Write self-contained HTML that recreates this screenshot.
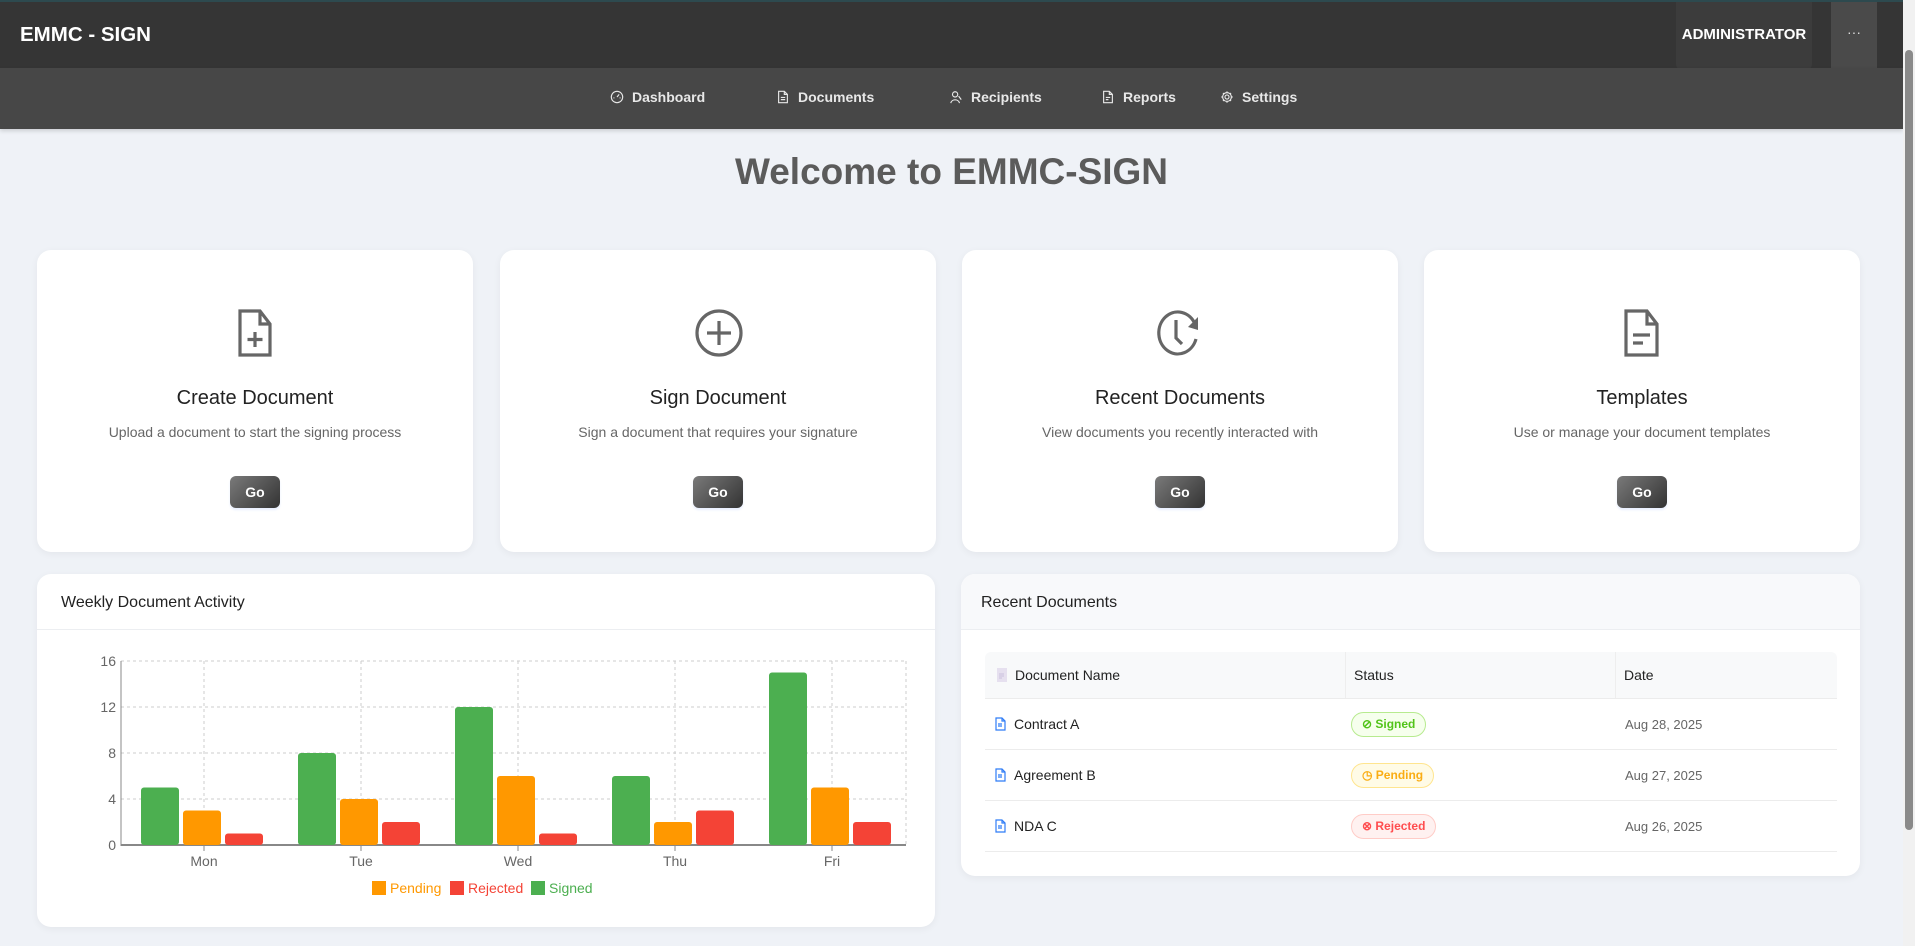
<!DOCTYPE html>
<html><head><meta charset="utf-8">
<style>
*{box-sizing:border-box;margin:0;padding:0}
body{width:1915px;height:946px;overflow:hidden;background:#eff2f7;font-family:"Liberation Sans",sans-serif;position:relative}
.top{position:absolute;left:0;top:0;width:1903px;height:68px;background:#353535;border-top:2px solid #2d4a4f}
.logo{position:absolute;left:20px;top:21px;color:#fff;font-weight:bold;font-size:20.5px}
.admin{position:absolute;left:1676px;top:0;width:136px;height:68px;background:#3c3c3c;border-radius:0 0 6px 6px;color:#fff;font-weight:bold;font-size:15px;text-align:center;line-height:66px}
.dots{position:absolute;left:1831px;top:0;width:46px;height:66px;background:#4a4a4a;color:#ddd;text-align:center;line-height:60px;font-size:14px}
.nav{position:absolute;left:0;top:68px;width:1903px;height:61px;background:#474747;box-shadow:0 2px 4px rgba(0,0,0,.15)}
.ni{position:absolute;top:21px;color:#e8e8e8;font-size:14px;font-weight:bold;display:flex;align-items:center;gap:8px}
.ni svg{width:14px;height:14px}
.sb{position:absolute;left:1903px;top:0;width:12px;height:946px;background:#f1f1f1}
.sb div{position:absolute;left:2px;top:50px;width:8px;height:780px;background:#8a8a8a;border-radius:4px}
h1{position:absolute;left:0;width:1903px;top:151px;text-align:center;font-size:37px;color:#5b5b5b;font-weight:bold}
.card{position:absolute;background:#fff;border-radius:14px;box-shadow:0 2px 8px rgba(0,0,0,.05)}
.c1{top:250px;width:436px;height:302px;text-align:center}
.c1 h3{position:absolute;top:387px;width:100%;font-size:20px;font-weight:normal;color:#222}
.c1 p{position:absolute;top:424px;width:100%;font-size:14px;color:#666}
.go{position:absolute;left:193px;top:476px;width:50px;height:32px;border-radius:6px;background:linear-gradient(135deg,#7a7a7a,#333);color:#fff;font-size:14px;font-weight:bold;line-height:32px;box-shadow:0 2px 2px rgba(100,150,255,.15)}
.hd{position:absolute;left:0;top:0;right:0;height:56px;border-bottom:1px solid #eceef1;font-size:16px;color:#222;padding:20px 0 0 24px;border-radius:14px 14px 0 0}
.tbl{position:absolute;left:24px;right:23px;top:78px}
.th{height:47px;background:#f8f9fa;border-bottom:1px solid #ececec;position:relative;border-radius:6px 6px 0 0;font-size:14px;color:#222}
.tr{height:51px;border-bottom:1px solid #ececec;position:relative;font-size:14px;color:#222}
.col{position:absolute;top:0;height:100%;display:flex;align-items:center}
.badge{display:inline-flex;align-items:center;gap:5px;height:25px;padding:0 10px;border-radius:13px;font-size:12px;font-weight:bold;border:1px solid}
.date{color:#666;font-size:13px}
</style></head><body>
<div class="top"><div class="logo">EMMC - SIGN</div><div class="admin">ADMINISTRATOR</div><div class="dots">···</div></div>
<div class="nav">
<div class="ni" style="left:610px"><svg viewBox="0 0 16 16" fill="none" stroke="#e8e8e8" stroke-width="1.3"><circle cx="8" cy="8" r="6.5"/><path d="M8 8l2.5-3M4 9h1M11 9h1"/></svg>Dashboard</div>
<div class="ni" style="left:776px"><svg viewBox="0 0 16 16" fill="none" stroke="#e8e8e8" stroke-width="1.3"><path d="M3 1.5h6.5l3.5 3.5v9.5H3z M9.5 1.5V5H13M5.5 8.5h5M5.5 11h5"/></svg>Documents</div>
<div class="ni" style="left:949px"><svg viewBox="0 0 16 16" fill="none" stroke="#e8e8e8" stroke-width="1.3"><circle cx="7" cy="5" r="3"/><path d="M2 15c1-5 9-5 10 0M11 7l3 4"/></svg>Recipients</div>
<div class="ni" style="left:1101px"><svg viewBox="0 0 16 16" fill="none" stroke="#e8e8e8" stroke-width="1.3"><path d="M3 1.5h6.5l3.5 3.5v9.5H3z M9.5 1.5V5H13M5.5 8.5h5M5.5 11h3"/></svg>Reports</div>
<div class="ni" style="left:1220px"><svg viewBox="0 0 16 16" fill="none" stroke="#e8e8e8" stroke-width="1.3"><circle cx="8" cy="8" r="2.3"/><path d="M8 1.5v2M8 12.5v2M1.5 8h2M12.5 8h2M3.4 3.4l1.4 1.4M11.2 11.2l1.4 1.4M3.4 12.6l1.4-1.4M11.2 4.8l1.4-1.4"/><circle cx="8" cy="8" r="5"/></svg>Settings</div>
</div>
<div class="sb"><div></div></div>
<h1>Welcome to EMMC-SIGN</h1>

<div class="card c1" style="left:37px">
<svg style="position:absolute;left:196px;top:58px" width="44" height="50" viewBox="0 0 44 50" fill="none" stroke="#666" stroke-width="3.2"><path d="M7 3h20l10 13v31H7z M27 3v13h10M22 24v15M14.5 31.5h15"/></svg>
<h3 style="top:137px">Create Document</h3><p style="top:174px">Upload a document to start the signing process</p><div class="go" style="top:226px">Go</div></div>
<div class="card c1" style="left:500px">
<svg style="position:absolute;left:194px;top:58px" width="50" height="50" viewBox="0 0 50 50" fill="none" stroke="#666" stroke-width="3.2"><circle cx="25" cy="25" r="22"/><path d="M25 13v24M13 25h24"/></svg>
<h3 style="top:137px">Sign Document</h3><p style="top:174px">Sign a document that requires your signature</p><div class="go" style="top:226px">Go</div></div>
<div class="card c1" style="left:962px">
<svg style="position:absolute;left:194px;top:58px" width="50" height="50" viewBox="0 0 50 50" fill="none" stroke="#666" stroke-width="3.2"><path d="M40 31A19 21 0 1 1 39 16"/><path d="M20 12v18l6 6"/><path d="M42 9l0 13l-10-3z" fill="#666" stroke="none"/></svg>
<h3 style="top:137px">Recent Documents</h3><p style="top:174px">View documents you recently interacted with</p><div class="go" style="top:226px">Go</div></div>
<div class="card c1" style="left:1424px">
<svg style="position:absolute;left:196px;top:58px" width="44" height="50" viewBox="0 0 44 50" fill="none" stroke="#666" stroke-width="3.2"><path d="M6 3h21l10 13v31H6z M27 3v13h10M13 27h17M13 35h10"/></svg>
<h3 style="top:137px">Templates</h3><p style="top:174px">Use or manage your document templates</p><div class="go" style="top:226px">Go</div></div>

<div class="card" style="left:37px;top:574px;width:898px;height:353px">
<div class="hd">Weekly Document Activity</div>
<svg style="position:absolute;left:0;top:0" width="898" height="353" viewBox="37 574 898 353" font-family="Liberation Sans" font-size="14">
<g stroke="#ccc" stroke-dasharray="3 3" stroke-width="1">
<line x1="121" y1="661" x2="906" y2="661"/><line x1="121" y1="707" x2="906" y2="707"/><line x1="121" y1="753" x2="906" y2="753"/><line x1="121" y1="799" x2="906" y2="799"/>
<line x1="204" y1="661" x2="204" y2="845"/><line x1="361" y1="661" x2="361" y2="845"/><line x1="518" y1="661" x2="518" y2="845"/><line x1="675" y1="661" x2="675" y2="845"/><line x1="832" y1="661" x2="832" y2="845"/><line x1="906" y1="661" x2="906" y2="845"/>
</g>
<line x1="121" y1="661" x2="121" y2="846" stroke="#888"/><line x1="121" y1="845" x2="906" y2="845" stroke="#888" stroke-width="2"/>
<g fill="#666" text-anchor="end"><text x="116" y="666">16</text><text x="116" y="712">12</text><text x="116" y="758">8</text><text x="116" y="804">4</text><text x="116" y="850">0</text></g>
<g fill="#666" text-anchor="middle" font-size="14"><text x="204" y="866">Mon</text><text x="361" y="866">Tue</text><text x="518" y="866">Wed</text><text x="675" y="866">Thu</text><text x="832" y="866">Fri</text></g>
<g stroke="#888"><line x1="204" y1="845" x2="204" y2="851"/><line x1="361" y1="845" x2="361" y2="851"/><line x1="518" y1="845" x2="518" y2="851"/><line x1="675" y1="845" x2="675" y2="851"/><line x1="832" y1="845" x2="832" y2="851"/></g>
<g>
<rect x="141" y="787.5" width="38" height="57.5" rx="3" fill="#4caf50"/><rect x="183" y="810.5" width="38" height="34.5" rx="3" fill="#ff9800"/><rect x="225" y="833.5" width="38" height="11.5" rx="3" fill="#f44336"/>
<rect x="298" y="753" width="38" height="92" rx="3" fill="#4caf50"/><rect x="340" y="799" width="38" height="46" rx="3" fill="#ff9800"/><rect x="382" y="822" width="38" height="23" rx="3" fill="#f44336"/>
<rect x="455" y="707" width="38" height="138" rx="3" fill="#4caf50"/><rect x="497" y="776" width="38" height="69" rx="3" fill="#ff9800"/><rect x="539" y="833.5" width="38" height="11.5" rx="3" fill="#f44336"/>
<rect x="612" y="776" width="38" height="69" rx="3" fill="#4caf50"/><rect x="654" y="822" width="38" height="23" rx="3" fill="#ff9800"/><rect x="696" y="810.5" width="38" height="34.5" rx="3" fill="#f44336"/>
<rect x="769" y="672.5" width="38" height="172.5" rx="3" fill="#4caf50"/><rect x="811" y="787.5" width="38" height="57.5" rx="3" fill="#ff9800"/><rect x="853" y="822" width="38" height="23" rx="3" fill="#f44336"/>
</g>
<g font-size="14"><rect x="372" y="881" width="14" height="14" fill="#ff9800"/><text x="390" y="893" fill="#ff9800">Pending</text>
<rect x="450" y="881" width="14" height="14" fill="#f44336"/><text x="468" y="893" fill="#f44336">Rejected</text>
<rect x="531" y="881" width="14" height="14" fill="#4caf50"/><text x="549" y="893" fill="#4caf50">Signed</text></g>
</svg>
</div>

<div class="card" style="left:961px;top:574px;width:899px;height:302px">
<div class="hd" style="background:#f8f9fb;padding-left:20px">Recent Documents</div>
<div class="tbl">
<div class="th"><div class="col" style="left:12px;gap:8px"><svg width="10" height="14" viewBox="0 0 10 14"><rect width="10" height="14" fill="#e6e0ef"/><path d="M2 6h5M2 8h5M2 10h3" stroke="#c9bfdc"/></svg>Document Name</div>
<div class="col" style="left:360px;border-left:1px solid #eee;padding-left:8px">Status</div>
<div class="col" style="left:630px;border-left:1px solid #eee;padding-left:8px">Date</div></div>
<div class="tr"><div class="col" style="left:10px;gap:8px"><svg width="11" height="14" viewBox="0 0 11 14" fill="none" stroke="#2f7cf6" stroke-width="1.2"><path d="M1 1h6l3 3v9H1z M7 1v3h3M3 7h4M3 9h4"/></svg>Contract A</div>
<div class="col" style="left:366px"><span class="badge" style="color:#52c41a;background:#f6ffed;border-color:#b7eb8f">⊘ Signed</span></div>
<div class="col date" style="left:640px">Aug 28, 2025</div></div>
<div class="tr"><div class="col" style="left:10px;gap:8px"><svg width="11" height="14" viewBox="0 0 11 14" fill="none" stroke="#2f7cf6" stroke-width="1.2"><path d="M1 1h6l3 3v9H1z M7 1v3h3M3 7h4M3 9h4"/></svg>Agreement B</div>
<div class="col" style="left:366px"><span class="badge" style="color:#faad14;background:#fffbe6;border-color:#ffe58f">◷ Pending</span></div>
<div class="col date" style="left:640px">Aug 27, 2025</div></div>
<div class="tr"><div class="col" style="left:10px;gap:8px"><svg width="11" height="14" viewBox="0 0 11 14" fill="none" stroke="#2f7cf6" stroke-width="1.2"><path d="M1 1h6l3 3v9H1z M7 1v3h3M3 7h4M3 9h4"/></svg>NDA C</div>
<div class="col" style="left:366px"><span class="badge" style="color:#ff4d4f;background:#fff1f0;border-color:#ffccc7">⊗ Rejected</span></div>
<div class="col date" style="left:640px">Aug 26, 2025</div></div>
</div>
</div>
</body></html>
